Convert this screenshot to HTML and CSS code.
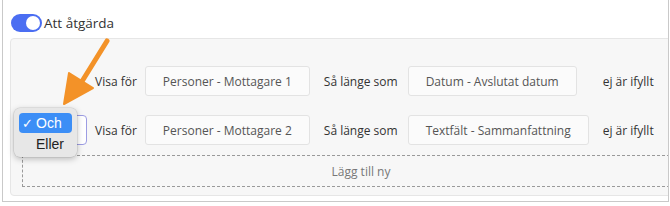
FILE: index.html
```html
<!DOCTYPE html>
<html lang="sv">
<head>
<meta charset="utf-8">
<link rel="stylesheet" href="styles.css">
</head>
<body>
<div class="frame">
  <div class="header">
    <span class="toggle"><span class="knob"></span></span>
    <span class="title">Att åtgärda</span>
  </div>
  <div class="panel">
    <div class="rows">
      <div class="cell-empty"></div>
      <div class="label">Visa för</div>
      <div class="box">Personer - Mottagare 1</div>
      <div class="label so">Så länge som</div>
      <div class="box">Datum - Avslutat datum</div>
      <div class="label ej">ej är ifyllt</div>

      <div class="select"><span class="caret"></span></div>
      <div class="label">Visa för</div>
      <div class="box">Personer - Mottagare 2</div>
      <div class="label so">Så länge som</div>
      <div class="box">Textfält - Sammanfattning</div>
      <div class="label ej">ej är ifyllt</div>
    </div>
    <div class="add">Lägg till ny</div>
  </div>

  <div class="popup">
    <div class="opt active"><span class="check">✓</span>Och</div>
    <div class="opt">Eller</div>
  </div>

  <svg class="arrow" width="60" height="70" viewBox="0 0 60 70">
    <path d="M48 3 L22 45" stroke="#f39228" stroke-width="5" stroke-linecap="round" fill="none"/>
    <path d="M5 66 L10 35 L34 50 Z" fill="#f39228" stroke="#f39228" stroke-width="2" stroke-linejoin="round"/>
  </svg>
</div>
</body>
</html>
```
FILE: styles.css
```css
html, body {
  margin: 0;
  padding: 0;
  background: #ffffff;
}
body {
  font-family: "Open Sans", "Noto Sans", sans-serif;
  color: #333;
}
.frame {
  position: relative;
  margin-left: 2px;
  width: 667px;
  height: 202px;
  box-sizing: border-box;
  border: 1px solid #c9c9c9;
  border-top: none;
  overflow: hidden;
  padding: 14px 0 0 8px;
}
.header {
  display: flex;
  align-items: center;
  gap: 2px;
  height: 18px;
}
.toggle {
  width: 31px;
  height: 18px;
  border-radius: 9px;
  background: #4b6ef2;
  display: flex;
  align-items: center;
  justify-content: flex-end;
  padding-right: 2px;
  box-sizing: border-box;
}
.knob {
  width: 14px;
  height: 14px;
  border-radius: 50%;
  background: #fff;
}
.title {
  font-size: 13.5px;
  color: #333;
  line-height: 18px;
}
.panel {
  margin-top: 6px;
  margin-left: -1px;
  width: 700px;
  height: 158px;
  box-sizing: border-box;
  background: #f7f7f7;
  border: 1px solid #e6e6e6;
  border-radius: 4px;
  padding: 27px 0 0 11px;
}
.rows {
  display: grid;
  grid-template-columns: 65px auto auto auto auto auto;
  justify-content: start;
  align-items: center;
  column-gap: 8px;
  row-gap: 19px;
}
.label {
  font-size: 12px;
  color: #333;
  white-space: nowrap;
}
.cell-empty {
  margin-right: 1px;
}
.so {
  margin-left: 6px;
  margin-right: 2px;
}
.ej {
  margin-left: 6px;
}
.box {
  height: 30px;
  box-sizing: border-box;
  justify-self: start;
  display: flex;
  align-items: center;
  padding: 0 17px;
  background: #fbfbfb;
  border: 1px solid #e3e3e3;
  border-radius: 3px;
  font-size: 12px;
  color: #555;
  white-space: nowrap;
}
.select {
  height: 30px;
  box-sizing: border-box;
  border: 1px solid #9d9de3;
  border-radius: 4px;
  background: #fff;
  position: relative;
}
.caret {
  position: absolute;
  right: 9px;
  top: 13px;
  width: 2px;
  height: 2px;
  background: #999;
}
.add {
  margin-top: 10px;
  height: 32px;
  width: 678px;
  box-sizing: border-box;
  border: 1px dashed #9a9a9a;
  display: flex;
  align-items: center;
  justify-content: center;
  font-size: 12px;
  color: #777;
}
.popup {
  position: absolute;
  left: 11px;
  top: 108px;
  width: 63px;
  height: 49px;
  box-sizing: border-box;
  padding: 5px;
  background: #e7e7e7;
  border-radius: 6px;
  box-shadow: 0 2px 6px rgba(0,0,0,0.25), 0 0 0 0.5px rgba(0,0,0,0.12);
  font-family: "Liberation Sans", Arial, sans-serif;
  font-size: 14px;
}
.opt {
  height: 20px;
  display: flex;
  align-items: center;
  padding-left: 17px;
  color: #222;
  border-radius: 4px;
}
.opt.active {
  background: #3c8ef6;
  color: #fff;
  padding-left: 3px;
  margin-bottom: 1px;
}
.check {
  width: 14px;
  font-size: 13px;
}
.arrow {
  position: absolute;
  left: 56px;
  top: 38px;
}
```
